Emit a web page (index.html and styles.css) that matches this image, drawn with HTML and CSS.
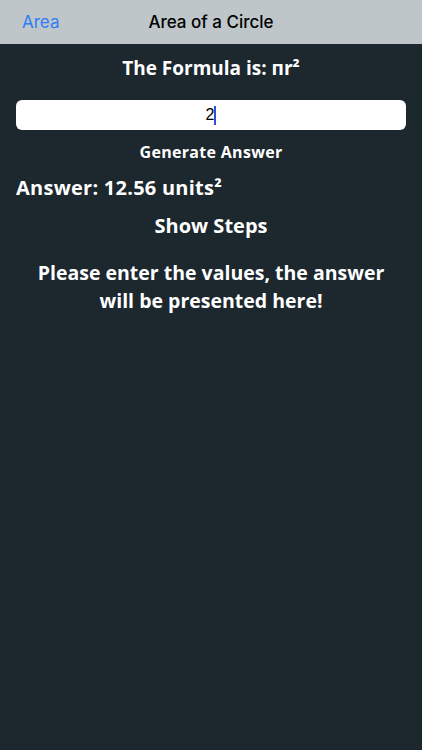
FILE: index.html
```html
<!DOCTYPE html>
<html>
<head>
<meta charset="utf-8">
<link rel="stylesheet" href="styles.css">
</head>
<body>
<div class="nav">
  <span class="back">Area</span>
  <span class="title">Area of a Circle</span>
</div>
<main class="content">
  <h1 class="formula">The Formula is: пr²</h1>
  <div class="field"><span class="value">2</span><span class="caret"></span></div>
  <div class="generate">Generate Answer</div>
  <div class="answer">Answer: 12.56 units²</div>
  <div class="steps">Show Steps</div>
  <p class="message">Please enter the values, the answer will be presented here!</p>
</main>
</body>
</html>
```
FILE: styles.css
```css
html, body {
  margin: 0;
  padding: 0;
  height: 100%;
}
body {
  background: #1c272e;
  font-family: "Open Sans", Lato, sans-serif;
  color: #ffffff;
}
.nav {
  height: 44px;
  background: #bfc6c9;
  display: flex;
  align-items: center;
  justify-content: center;
  position: relative;
  font-family: Inter, "Liberation Sans", sans-serif;
}
.back {
  position: absolute;
  left: 22px;
  top: 12px;
  color: #2f7cf6;
  font-size: 17px;
}
.title {
  color: #000;
  font-size: 17px;
  font-weight: 500;
}
.content {
  display: flex;
  flex-direction: column;
  padding: 0 16px;
}
.formula {
  margin: 12px 0 0;
  font-size: 19px;
  font-weight: 700;
  text-align: center;
  line-height: 24px;
}
.field {
  margin-top: 20px;
  height: 30px;
  background: #ffffff;
  border-radius: 6px;
  display: flex;
  align-items: center;
  justify-content: center;
  color: #000;
  font-family: "Liberation Sans", sans-serif;
  font-size: 16px;
}
.caret {
  width: 2px;
  height: 19px;
  background: #2c4fd6;
}
.generate {
  margin-top: 12px;
  text-align: center;
  font-size: 16px;
  font-weight: 700;
  line-height: 21px;
  letter-spacing: 0.3px;
}
.answer {
  margin-top: 12px;
  font-size: 20px;
  font-weight: 700;
  line-height: 25px;
  letter-spacing: 0.25px;
}
.steps {
  margin-top: 13px;
  text-align: center;
  font-size: 20px;
  font-weight: 700;
  line-height: 25px;
}
.message {
  margin: 21px 6px 0;
  text-align: center;
  font-size: 19.5px;
  font-weight: 700;
  line-height: 28px;
}
```
